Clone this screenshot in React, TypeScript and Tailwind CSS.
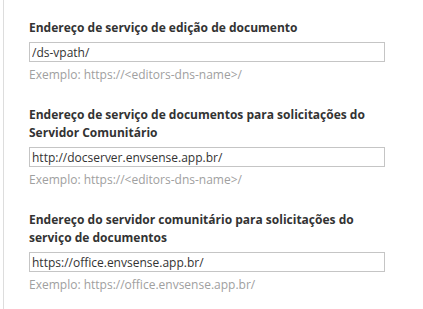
import React from 'react';

interface Field {
  label: string;
  value: string;
  example: string;
}

const fields: Field[] = [
  {
    label: 'Endereço de serviço de edição de documento',
    value: '/ds-vpath/',
    example: 'Exemplo: https://<editors-dns-name>/',
  },
  {
    label: 'Endereço de serviço de documentos para solicitações do Servidor Comunitário',
    value: 'http://docserver.envsense.app.br/',
    example: 'Exemplo: https://<editors-dns-name>/',
  },
  {
    label: 'Endereço do servidor comunitário para solicitações do serviço de documentos',
    value: 'https://office.envsense.app.br/',
    example: 'Exemplo: https://office.envsense.app.br/',
  },
];

const App: React.FC = () => {
  return (
    <div className="h-[309px] w-[423px] overflow-hidden bg-white font-['Open_Sans',sans-serif]">
      <div className="ml-[3px] h-full border-l border-[#dddddd] pl-[25px] pt-[19px]">
        <div className="flex w-[356px] flex-col gap-[23px]">
          {fields.map((f) => (
            <div key={f.label} className="flex flex-col">
              <label className="text-[12px] font-bold leading-[18px] text-[#333333]">{f.label}</label>
              <input
                defaultValue={f.value}
                className="mt-[5px] h-[20px] w-full border border-[#c5c5c5] px-[2px] text-[12px] text-[#333333] outline-none"
              />
              <span className="mt-[4px] text-[12px] leading-[17px] text-[#a0a0a0]">{f.example}</span>
            </div>
          ))}
        </div>
      </div>
    </div>
  );
};

export default App;
